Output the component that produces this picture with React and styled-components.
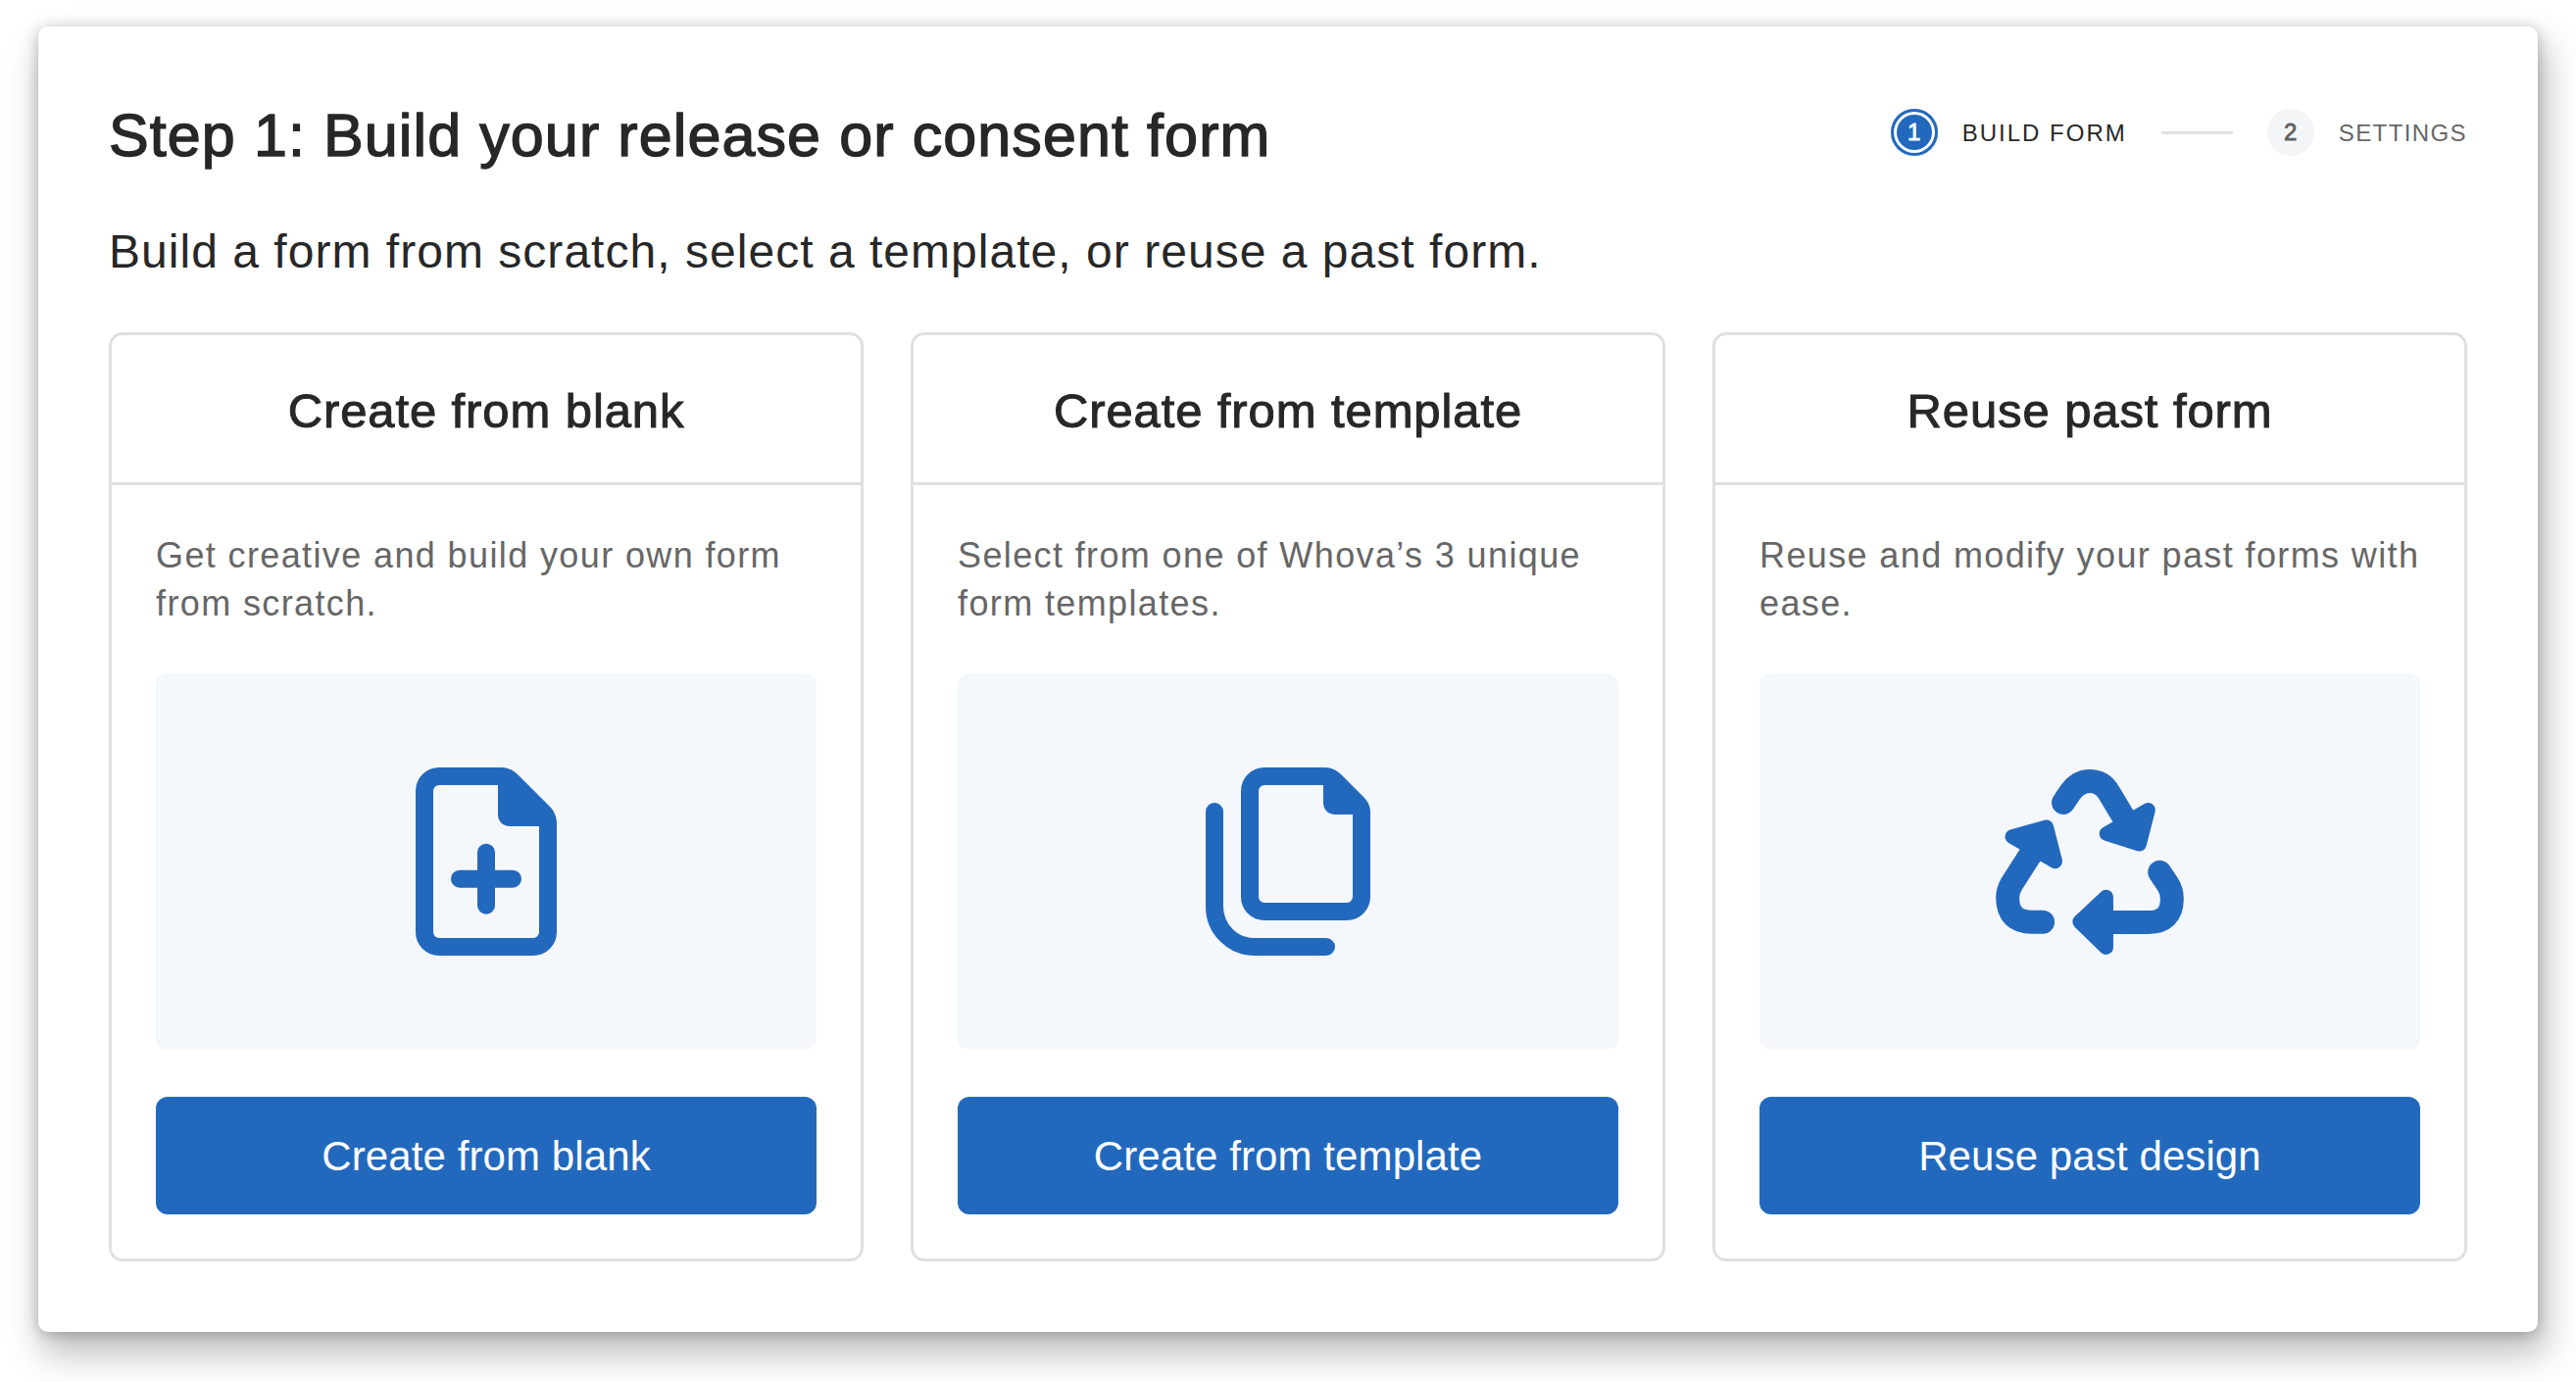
import React from 'react';
import styled, { createGlobalStyle } from 'styled-components';

const blue = '#2269bd';

const GlobalStyle = createGlobalStyle`
  html, body {
    margin: 0;
    padding: 0;
    background: #fff;
    font-family: 'Liberation Sans', Arial, sans-serif;
  }
`;

const Page = styled.div`
  width: 2628px;
  height: 1410px;
  padding: 27px 39px 51px;
  box-sizing: border-box;
  overflow: hidden;
`;

const Panel = styled.div`
  height: 1332px;
  box-sizing: border-box;
  padding: 72px;
  background: #fff;
  border-radius: 10px;
  box-shadow: 0 2px 14px rgba(0, 0, 0, 0.24), 6px 20px 36px 3px rgba(0, 0, 0, 0.25);
`;

const HeaderRow = styled.div`
  display: flex;
  justify-content: space-between;
  align-items: center;
  height: 76px;
`;

const Heading = styled.h1`
  margin: 2px 0 0;
  font-size: 61px;
  line-height: 76px;
  font-weight: 400;
  letter-spacing: 1.1px;
  color: #272727;
  -webkit-text-stroke: 1.4px #272727;
`;

const Stepper = styled.div`
  display: flex;
  align-items: center;
  margin-top: -4px;
`;

const StepCircle = styled.div`
  width: 48px;
  height: 48px;
  border-radius: 50%;
  box-sizing: border-box;
  display: flex;
  align-items: center;
  justify-content: center;
  font-size: 24px;
  -webkit-text-stroke: 0.8px currentColor;
  background: ${(p) => (p.$active ? blue : '#f4f5f7')};
  color: ${(p) => (p.$active ? '#fff' : '#5f5f5f')};
  box-shadow: ${(p) => (p.$active ? `inset 0 0 0 3px ${blue}, inset 0 0 0 6px #fff` : 'none')};
`;

const StepLabel = styled.span`
  margin-left: 25px;
  padding-top: 1px;
  font-size: 24px;
  letter-spacing: ${(p) => (p.$active ? '2px' : '1.4px')};
  color: ${(p) => (p.$active ? '#272727' : '#666')};
`;

const StepLine = styled.div`
  width: 73px;
  height: 3px;
  margin: 0 35px;
  background: #e0e0e0;
`;

const Sub = styled.p`
  margin: 52px 0 0;
  font-size: 48px;
  line-height: 60px;
  letter-spacing: 1.03px;
  color: #272727;
`;

const Cards = styled.div`
  display: grid;
  grid-template-columns: repeat(3, 770px);
  gap: 48px;
  margin-top: 52px;
`;

const Card = styled.div`
  height: 948px;
  box-sizing: border-box;
  border: 3px solid #e0e0e0;
  border-radius: 14px;
  display: flex;
  flex-direction: column;
`;

const CardTitle = styled.div`
  height: 153px;
  flex: none;
  box-sizing: border-box;
  padding-top: 3px;
  border-bottom: 3px solid #e0e0e0;
  display: flex;
  align-items: center;
  justify-content: center;
  font-size: 49px;
  letter-spacing: 0.9px;
  color: #272727;
  -webkit-text-stroke: 1px #272727;
`;

const CardBody = styled.div`
  flex: 1;
  display: flex;
  flex-direction: column;
  padding: 47px 45px 45px;
`;

const Desc = styled.p`
  margin: 1px 0 0;
  height: 144px;
  font-size: 36px;
  line-height: 48.5px;
  letter-spacing: 1.38px;
  color: #666;
`;

const Illustration = styled.div`
  height: 384px;
  background: #f4f7fc;
  border-radius: 12px;
  display: flex;
  align-items: center;
  justify-content: center;
`;

const ActionButton = styled.button`
  height: 120px;
  margin-top: 48px;
  padding: 2px 0 0;
  border: none;
  border-radius: 12px;
  background: ${blue};
  color: #fff;
  font-family: inherit;
  font-size: 42px;
  letter-spacing: 0.1px;
`;

const BlankIcon = () => (
  <svg width="144" height="192" viewBox="0 0 144 192">
    <path
      fill={blue}
      fillRule="evenodd"
      d="M24 0H88C94 0 100 3 104 7L137 40C141 44 144 50 144 57V168A24 24 0 0 1 120 192H24A24 24 0 0 1 0 168V24A24 24 0 0 1 24 0ZM24 18A6 6 0 0 0 18 24V168A6 6 0 0 0 24 174H120A6 6 0 0 0 126 168V60H96C89 60 84 55 84 48V18Z"
    />
    <path fill="none" stroke={blue} strokeWidth="18" strokeLinecap="round" d="M45 113.7H99M72 86.7V140.7" />
  </svg>
);

const TemplateIcon = () => (
  <svg width="168" height="192" viewBox="0 0 168 192">
    <path
      fill={blue}
      fillRule="evenodd"
      d="M60 0H122C128 0 134 3 138 7L161 30C165 34 168 39 168 45V132A24 24 0 0 1 144 156H60A24 24 0 0 1 36 132V24A24 24 0 0 1 60 0ZM60 18A6 6 0 0 0 54 24V132A6 6 0 0 0 60 138H144A6 6 0 0 0 150 132V48H132C125 48 120 43 120 36V18Z"
    />
    <path fill="none" stroke={blue} strokeWidth="18" strokeLinecap="round" d="M9 45V142A41 41 0 0 0 50 183H123" />
  </svg>
);

const ReuseIcon = () => (
  <svg width="192" height="189" viewBox="78 68 576 568">
    <g fill="none" stroke={blue} strokeLinecap="round" strokeLinejoin="round">
      <g strokeWidth="72">
        <path d="M285 170L305 140Q330 104 365 104Q405 104 425 140L470 215" />
        <path d="M190 320L127 418Q114 440 114 462Q114 536 190 536H222" />
        <path d="M420 537H545Q618 537 618 465Q618 440 605 420L580 383" />
      </g>
      <g strokeWidth="44" fill={blue}>
        <path d="M545 192L518 297L417 265Z" />
        <path d="M128 274L233 245L260 350Z" />
        <path d="M335 535L416 459V614Z" />
      </g>
    </g>
  </svg>
);

const options = [
  {
    title: 'Create from blank',
    desc: 'Get creative and build your own form from scratch.',
    Icon: BlankIcon,
    action: 'Create from blank',
  },
  {
    title: 'Create from template',
    desc: 'Select from one of Whova’s 3 unique form templates.',
    Icon: TemplateIcon,
    action: 'Create from template',
  },
  {
    title: 'Reuse past form',
    desc: 'Reuse and modify your past forms with ease.',
    Icon: ReuseIcon,
    action: 'Reuse past design',
  },
];

const App = () => (
  <Page>
    <GlobalStyle />
    <Panel>
      <HeaderRow>
        <Heading>Step 1: Build your release or consent form</Heading>
        <Stepper>
          <StepCircle $active>1</StepCircle>
          <StepLabel $active>BUILD FORM</StepLabel>
          <StepLine />
          <StepCircle>2</StepCircle>
          <StepLabel>SETTINGS</StepLabel>
        </Stepper>
      </HeaderRow>
      <Sub>Build a form from scratch, select a template, or reuse a past form.</Sub>
      <Cards>
        {options.map(({ title, desc, Icon, action }) => (
          <Card key={title}>
            <CardTitle>{title}</CardTitle>
            <CardBody>
              <Desc>{desc}</Desc>
              <Illustration>
                <Icon />
              </Illustration>
              <ActionButton>{action}</ActionButton>
            </CardBody>
          </Card>
        ))}
      </Cards>
    </Panel>
  </Page>
);

export default App;
